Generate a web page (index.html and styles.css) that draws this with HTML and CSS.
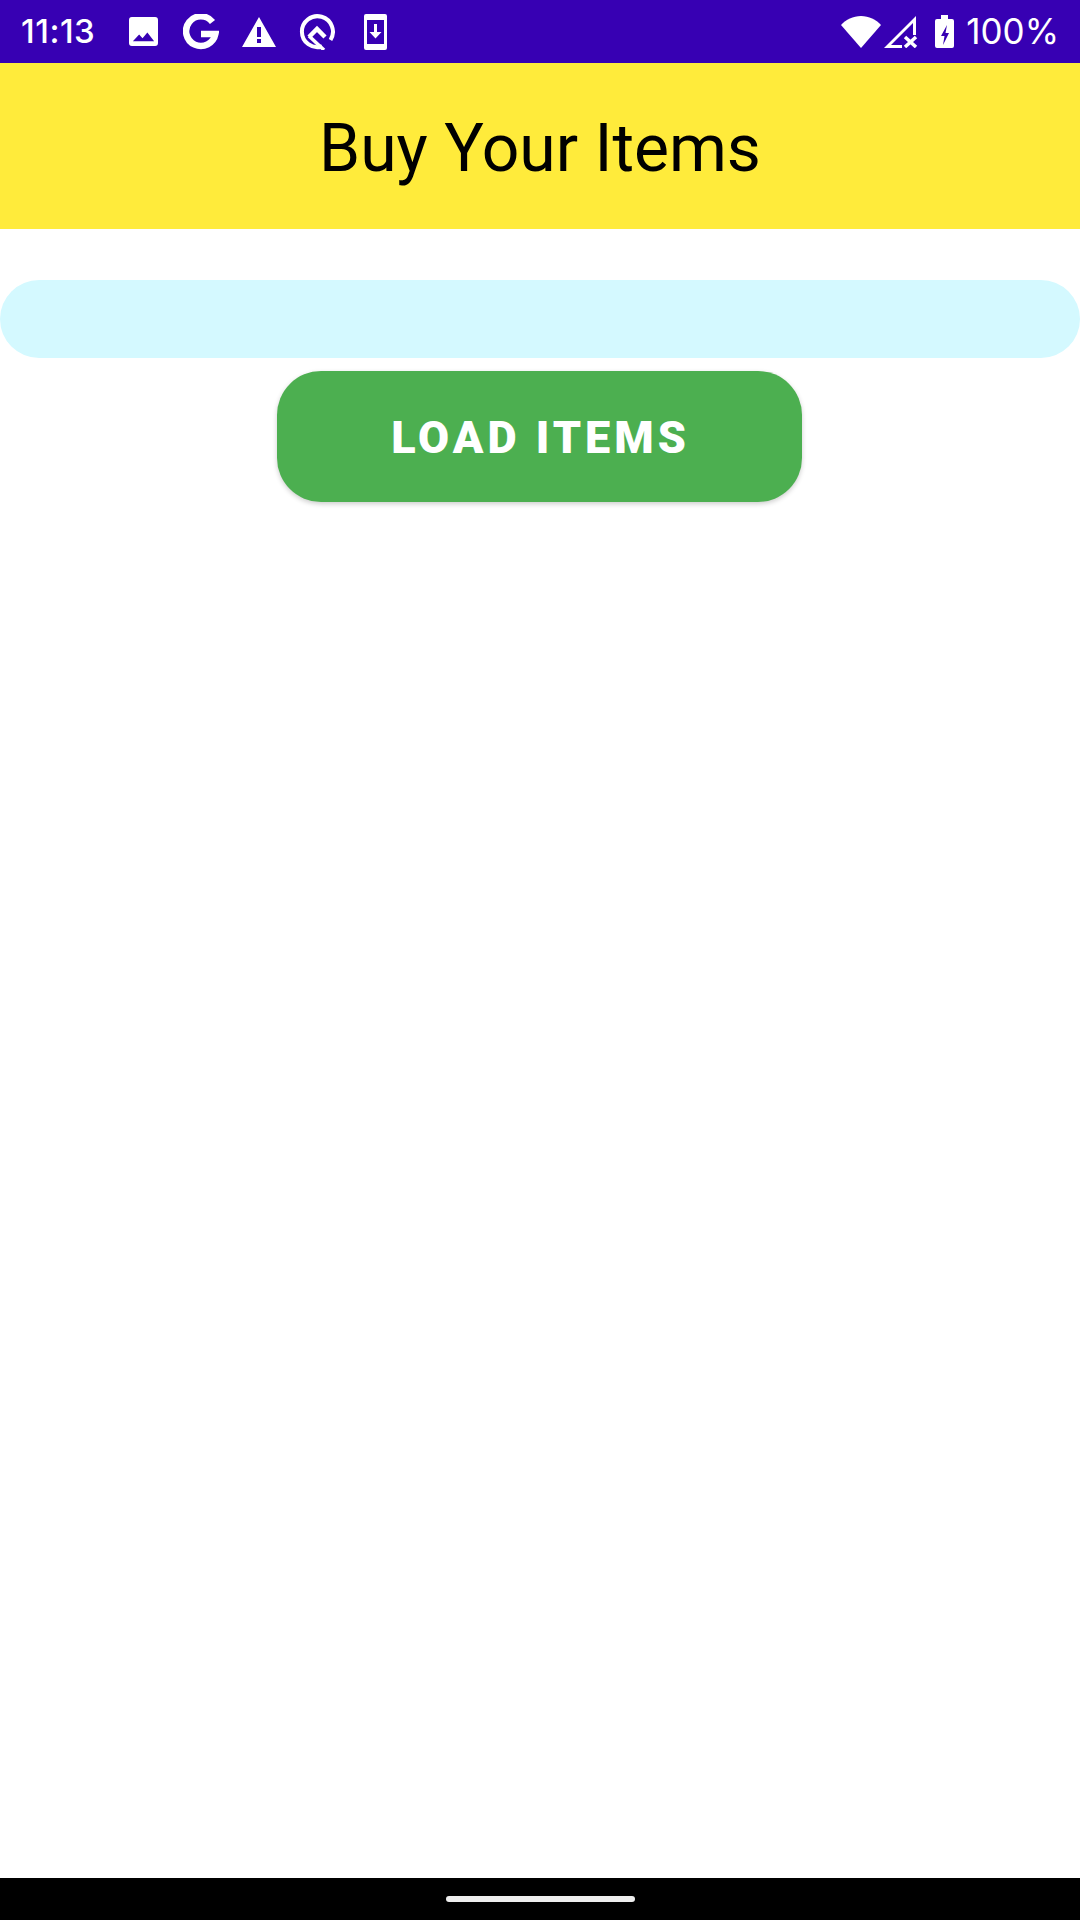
FILE: index.html
```html
<!DOCTYPE html>
<html lang="en">
<head>
    <meta charset="UTF-8">
    <meta name="viewport" content="width=device-width, initial-scale=1.0">
    <title>Buy Your Items</title>
    <link rel="stylesheet" href="styles.css">
</head>
<body>
    <div class="screen">
        <div class="status-bar">
            <div class="status-left">
                <span class="time">11:13</span>
                <div class="notif-icons">
                    <!-- image -->
                    <svg class="icon-image" viewBox="0 0 30 30"><path fill="#fff" fill-rule="evenodd" d="M3 0h24a3 3 0 0 1 3 3v24a3 3 0 0 1-3 3H3a3 3 0 0 1-3-3V3a3 3 0 0 1 3-3zM4 25h22l-7-9-5 6-3.500-4z"/></svg>
                    <!-- google -->
                    <svg class="icon-g" viewBox="0 0 36 36"><path fill="none" stroke="#fff" stroke-width="6.500" d="M29.500 8A14.800 14.800 0 1 0 32.400 20H18"/></svg>
                    <!-- warning -->
                    <svg class="icon-warn" viewBox="0 0 34 30"><path fill="#fff" fill-rule="evenodd" d="M17 0l17 30H0zM15 10v10h4V10zM15 22v4h4v-4z"/></svg>
                    <!-- q -->
                    <svg class="icon-q" viewBox="0 0 36 36"><path fill="none" stroke="#fff" stroke-width="4" d="M23 32.500A15.500 15.500 0 1 1 31.500 26"/><path fill="none" stroke="#fff" stroke-width="4.500" d="M10 23l8-8 8 8"/><path fill="none" stroke="#fff" stroke-width="3.500" d="M10 22l15 14"/></svg>
                    <!-- download to device -->
                    <svg class="icon-dl" viewBox="0 0 23 36"><path fill="#fff" fill-rule="evenodd" d="M2 0h19a2 2 0 0 1 2 2v32a2 2 0 0 1-2 2H2a2 2 0 0 1-2-2V2a2 2 0 0 1 2-2zM3 6v24h17V6zM10 10h3v8h4.500l-6 6.500-6-6.500H10z"/></svg>
                </div>
            </div>
            <div class="status-right">
                <svg class="icon-wifi" viewBox="0 0 40 32"><path fill="#fff" d="M0 9C5 3.500 12 0 20 0s15 3.500 20 9L20 32z"/></svg>
                <svg class="icon-signal" viewBox="0 0 34 32"><path fill="#fff" d="M0 32L32 0v19h-3V7L7 29h11v3z"/><path fill="none" stroke="#fff" stroke-width="3.500" d="M21 21l11 10M32 21L21 31"/></svg>
                <svg class="icon-battery" viewBox="0 0 19 33"><path fill="#fff" fill-rule="evenodd" d="M6 0h7v4h4a2 2 0 0 1 2 2v25a2 2 0 0 1-2 2H2a2 2 0 0 1-2-2V6a2 2 0 0 1 2-2h4zM12 10L6 21h3.500L8 30l6-12h-3.500z"/></svg>
                <span class="battery-text">100%</span>
            </div>
        </div>

        <header class="app-header">
            <h1>Buy Your Items</h1>
        </header>

        <main class="content">
            <div class="search-box"></div>
            <button class="load-btn">Load Items</button>
        </main>

        <div class="nav-bar">
            <div class="nav-handle"></div>
        </div>
    </div>
</body>
</html>
```

FILE: styles.css
```css
/* page */
body {
    margin: 0;
    background-color: #fff;
    font-family: Roboto, "Liberation Sans", sans-serif;
}

.screen {
    display: flex;
    flex-direction: column;
    height: 1920px;
}

/* status bar */
.status-bar {
    display: flex;
    justify-content: space-between;
    align-items: center;
    height: 63px;
    padding: 0 21px 0 21px;
    background-color: #3700b3;
    color: #fff;
    font-family: Inter, Roboto, sans-serif;
}

.status-left,
.status-right,
.notif-icons {
    display: flex;
    align-items: center;
}

.status-left {
    width: 366px;
    justify-content: space-between;
}

.notif-icons {
    gap: 23px;
}

.time,
.battery-text {
    line-height: 63px;
}

.time {
    font-size: 33px;
    font-weight: 500;
    letter-spacing: 0.500px;
}

.battery-text {
    font-size: 35px;
}

.status-right svg {
    flex: none;
}

.icon-image { width: 29px; height: 29px; }
.icon-g { width: 36px; height: 36px; margin-left: 2px; }
.icon-warn { width: 34px; height: 30px; }
.icon-q { width: 36px; height: 36px; }
.icon-dl { width: 23px; height: 36px; margin-left: 6px; }
.icon-wifi { width: 40px; height: 32px; }
.icon-signal { width: 34px; height: 32px; margin-left: 3px; }
.icon-battery { width: 19px; height: 33px; margin-left: 17px; }
.battery-text { margin-left: 12px; }

/* yellow header */
.app-header {
    display: flex;
    justify-content: center;
    align-items: center;
    height: 166px;
    background-color: #ffeb3b;
}

h1 {
    margin: 5px 0 0;
    font-size: 66px;
    font-weight: 400;
    color: #000;
}

/* main part */
.content {
    flex: 1;
    display: flex;
    flex-direction: column;
    align-items: center;
    padding-top: 51px;
}

.search-box {
    align-self: stretch;
    height: 78px;
    border-radius: 39px;
    background-color: #d4f9ff;
}

.load-btn {
    width: 525px;
    height: 131px;
    margin: 13px 1px 0 0;
    padding: 2px 0 0 2px;
    border: none;
    border-radius: 44px;
    background-color: #4caf50;
    color: #fff;
    font-family: Roboto, "Liberation Sans", sans-serif;
    font-size: 45px;
    font-weight: 900;
    letter-spacing: 4px;
    text-transform: uppercase;
    box-shadow: 0 2px 5px rgba(0, 0, 0, 0.2);
}

/* bottom nav */
.nav-bar {
    display: flex;
    justify-content: center;
    align-items: center;
    height: 42px;
    background-color: #000;
}

.nav-handle {
    width: 189px;
    height: 6px;
    border-radius: 3px;
    background-color: #eee;
}
```
